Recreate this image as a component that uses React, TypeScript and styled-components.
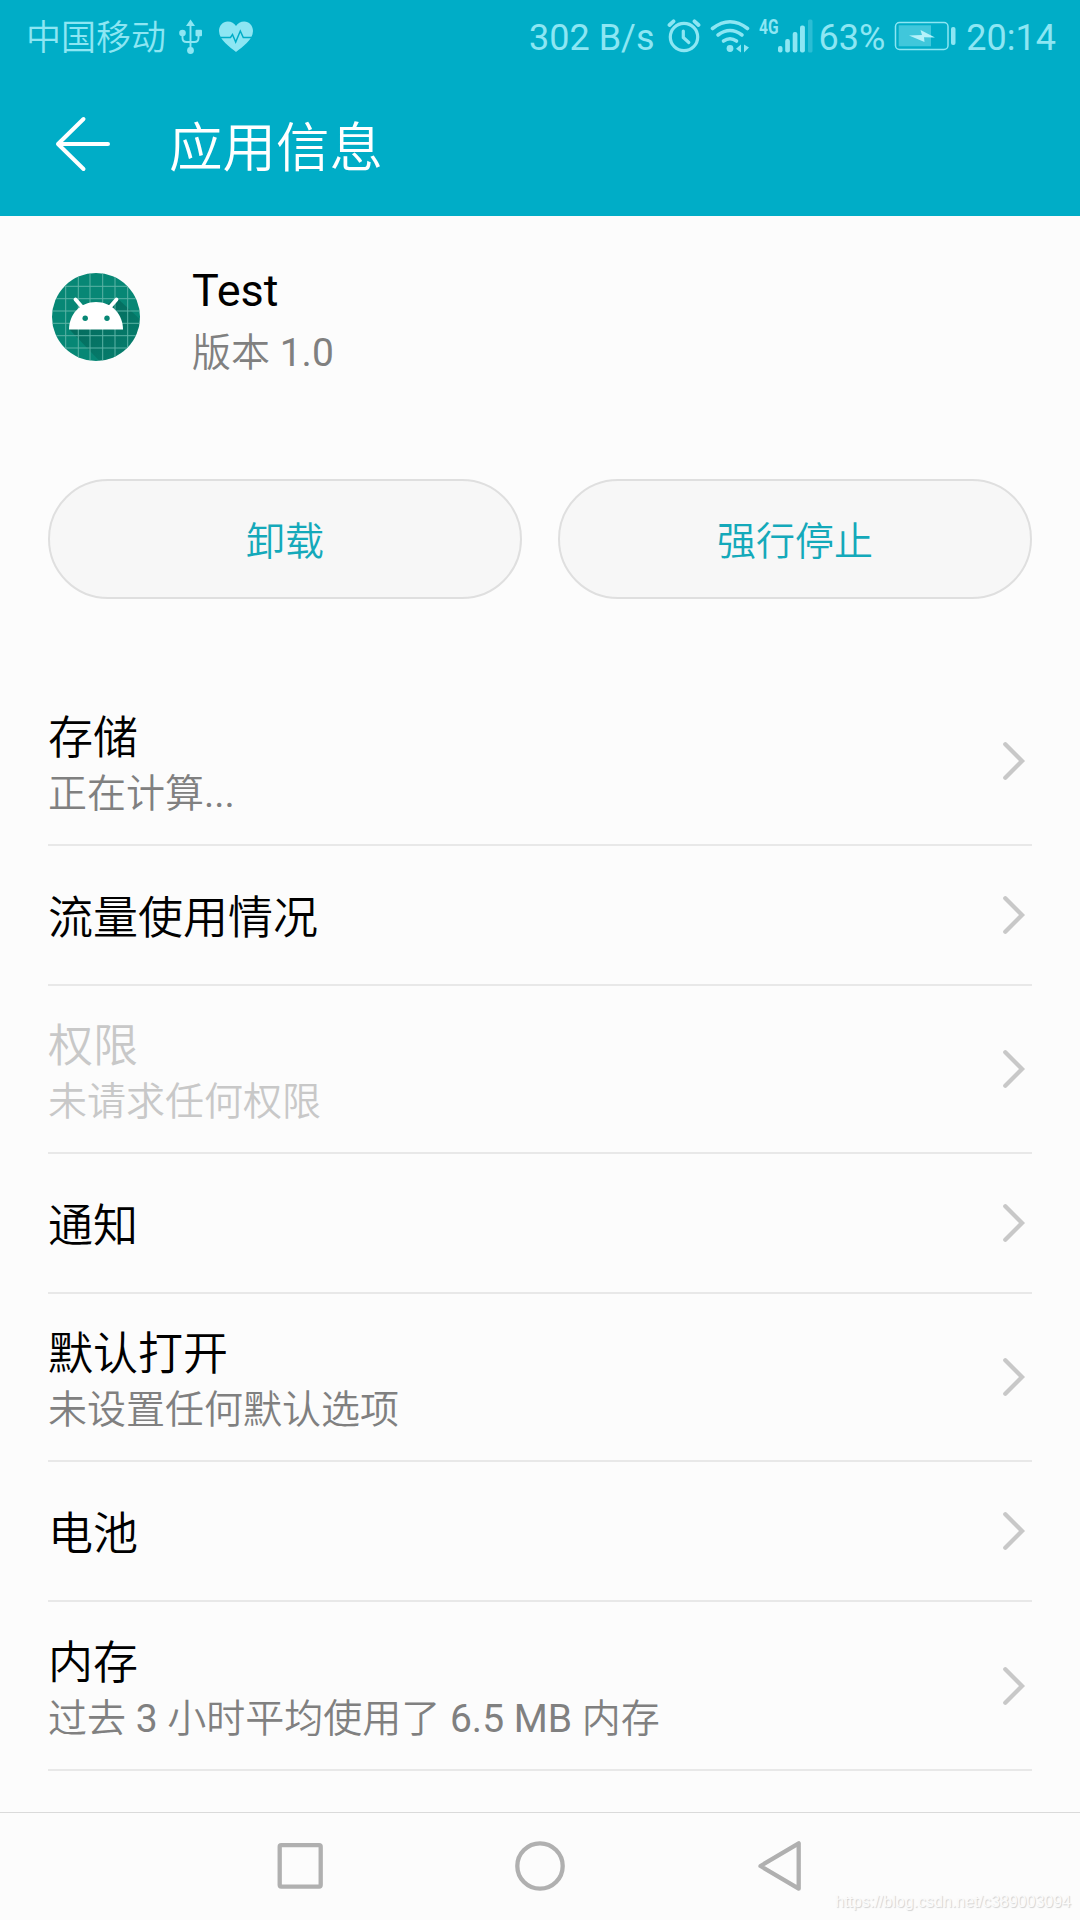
import React from "react";
import styled, { createGlobalStyle } from "styled-components";

const GlobalStyle = createGlobalStyle`
  *, *::before, *::after { box-sizing: border-box; }
  body { margin: 0; background: #fcfcfc; }
`;

const Screen = styled.div`
  display: flex;
  flex-direction: column;
  width: 1080px;
  height: 1920px;
  overflow: hidden;
  background: #fcfcfc;
  color: #000;
  font-family: Roboto, "Noto Sans CJK SC DemiLight", "Noto Sans CJK SC", sans-serif;
  font-size: 45px;
`;

const Header = styled.header`
  display: flex;
  flex-direction: column;
  height: 216px;
  flex: none;
  background: #00adc7;
`;

const StatusBar = styled.div`
  display: flex;
  align-items: center;
  height: 72px;
  padding: 0 24px 0 26px;
  color: #8de6f3;
  font-size: 36px;
  line-height: 72px;
  white-space: nowrap;
`;

const StatusText = styled.span<{ $size?: number; $gap?: number; $drop?: number }>`
  padding-top: ${(p) => p.$drop ?? 4}px;
  font-size: ${(p) => p.$size ?? 36}px;
  line-height: 68px;
  margin-left: ${(p) => p.$gap ?? 0}px;
`;

const StatusIcon = styled.svg<{ $gap?: number }>`
  display: block;
  flex: none;
  height: 72px;
  margin-left: ${(p) => p.$gap ?? 0}px;
`;

const Network = styled.span`
  display: flex;
  align-self: flex-start;
  width: 19px;
  margin-left: 9px;
  padding-top: 17px;
  font-family: Roboto, sans-serif;
  font-size: 21px;
  font-weight: 700;
  line-height: 20px;
  transform: scaleX(0.74);
  transform-origin: left center;
`;

const Spacer = styled.div`
  flex: 1;
`;

const TitleBar = styled.div`
  display: flex;
  align-items: center;
  height: 144px;
  padding-left: 54px;
  color: #fff;
`;

const BackIcon = styled.svg`
  width: 58px;
  height: 60px;
`;

const Title = styled.h1`
  margin: 0 0 1px 57px;
  font-family: "Noto Sans CJK SC DemiLight", "Noto Sans CJK SC", sans-serif;
  font-size: 53.5px;
  font-weight: 350;
  line-height: 72px;
`;

const AppInfo = styled.section`
  display: flex;
  height: 263px;
  flex: none;
  padding: 45px 52px 0;
`;

const AppIcon = styled.svg`
  width: 88px;
  height: 88px;
  margin-top: 12px;
`;

const AppText = styled.div`
  margin-left: 52px;
`;

const AppName = styled.div`
  height: 60px;
  font-size: 45px;
  line-height: 60px;
`;

const AppVersion = styled.div`
  height: 64px;
  color: #808080;
  font-size: 39px;
  line-height: 64px;
`;

const Actions = styled.section`
  display: flex;
  gap: 36px;
  flex: none;
  height: 198.4px;
  padding: 0 48px;
`;

const ActionButton = styled.button`
  flex: 1;
  height: 120px;
  padding: 0 0 2px;
  border: 2px solid #dfdfdf;
  border-radius: 60px;
  background: #f7f7f7;
  color: #14a9ba;
  font: inherit;
  font-size: 39px;
`;

const List = styled.ul`
  flex: 1;
  margin: 0;
  padding: 0 48px;
  list-style: none;
`;

const Row = styled.li<{ $tall: boolean; $disabled?: boolean }>`
  display: flex;
  align-items: center;
  justify-content: space-between;
  height: ${(p) => (p.$tall ? 168.33 : 140)}px;
  padding-right: 6px;
  border-bottom: 2px solid #e8e8e8;
  color: ${(p) => (p.$disabled ? "#c8c8c8" : "#000")};
`;

const RowText = styled.div<{ $tall: boolean }>`
  display: flex;
  flex-direction: column;
  padding-top: ${(p) => (p.$tall ? 11 : 8)}px;
`;

const RowTitle = styled.span`
  font-size: 45px;
  line-height: 56px;
`;

const RowSummary = styled.span<{ $disabled?: boolean }>`
  color: ${(p) => (p.$disabled ? "#c8c8c8" : "#808080")};
  font-size: 39px;
  line-height: 55px;
`;

const ChevronSvg = styled.svg`
  width: 26px;
  height: 44px;
`;

const NavBar = styled.nav`
  display: flex;
  position: relative;
  align-items: center;
  justify-content: center;
  gap: 184px;
  flex: none;
  height: 108px;
  padding-bottom: 2px;
  border-top: 1px solid #dadada;
`;

const NavIcon = styled.svg`
  width: 56px;
  height: 56px;
`;

const Watermark = styled.span`
  position: absolute;
  right: 9px;
  bottom: 8px;
  color: #fbfbfb;
  font-family: "Liberation Sans", Arial, sans-serif;
  font-size: 16px;
  line-height: 20px;
  text-shadow: 1px 1px 1px #d0d0d0;
`;

const Usb = () => (
  <StatusIcon $gap={12} width="26" viewBox="178 0 26 72" fill="currentColor">
    <path d="M190.500 19.500l4.500 6.500h-9z" />
    <circle cx="182.500" cy="33" r="3.300" />
    <rect x="195.500" y="29.800" width="6.500" height="6.500" rx="1" />
    <circle cx="190.500" cy="50.500" r="3.400" />
    <path
      d="M190.500 24v25M182.500 34v4q0 4 4 4h8q4 0 4-4v-4"
      fill="none"
      stroke="currentColor"
      strokeWidth="1.900"
    />
  </StatusIcon>
);

const Heart = () => (
  <StatusIcon $gap={14} width="36" viewBox="218 0 36 72">
    <path
      d="M236 52C230 47 219 40 219 31c0-5.500 4-9.500 8.700-9.500 3.700 0 6.700 1.800 8.300 4.500 1.600-2.700 4.600-4.500 8.300-4.500 4.700 0 8.700 4 8.700 9.500 0 9-11 16-17 21z"
      fill="currentColor"
    />
    <path
      d="M219 37.500h11.500l2-3 3.200 7.500 4.600-11 3 6.500H253"
      fill="none"
      stroke="#00adc7"
      strokeWidth="1.500"
    />
  </StatusIcon>
);

const Alarm = () => (
  <StatusIcon
    $gap={12}
    width="34"
    viewBox="667 0 34 72"
    fill="none"
    stroke="currentColor"
    strokeLinecap="round"
  >
    <circle cx="684" cy="37" r="13.700" strokeWidth="3.200" />
    <path d="M683.300 31v6.500l5.500 5" strokeWidth="3.200" />
    <path d="M669.500 25l4-3.700M698.500 25l-4-3.700" strokeWidth="3.800" />
  </StatusIcon>
);

const Wifi = () => (
  <StatusIcon
    $gap={9}
    width="40"
    viewBox="710 0 40 72"
    fill="none"
    stroke="currentColor"
    strokeLinecap="round"
    strokeWidth="3.600"
  >
    <path d="M712.500 28.500q17.500-13.500 35 0" />
    <path d="M718 35q12-9 24 0" />
    <path d="M723.500 41q6.500-4.500 13 0" />
    <circle cx="730" cy="48.500" r="3.400" fill="currentColor" stroke="none" />
    <path d="M741 44.500v8l-5-3.800zM744 44.500v8l5-5z" fill="currentColor" stroke="none" />
  </StatusIcon>
);

const Signal = () => (
  <StatusIcon $gap={-1} width="36" viewBox="777 0 36 72" fill="currentColor">
    <rect x="778" y="46" width="4.500" height="6.500" rx="2" />
    <rect x="785.200" y="39" width="4.700" height="13.500" rx="2" />
    <rect x="792.700" y="32" width="4.700" height="20.500" rx="2" />
    <rect x="800" y="25.500" width="4.900" height="27" rx="2" />
    <rect x="808" y="19.500" width="4.500" height="33" rx="1.500" opacity="0.300" />
  </StatusIcon>
);

const Battery = () => (
  <StatusIcon $gap={9} width="62" viewBox="894 0 62 72" fill="currentColor">
    <rect
      x="895.500"
      y="22.500"
      width="52.500"
      height="27"
      rx="4"
      fill="none"
      stroke="currentColor"
      strokeWidth="1.500"
    />
    <rect x="898.700" y="25.300" width="32.300" height="21" opacity="0.450" />
    <path d="M909 35.500l13-.5-1.500-5 14.500 7.500-11-.2.500 4.700z" fill="#b5f2fa" />
    <rect x="951" y="27" width="4.500" height="18" rx="2" />
  </StatusIcon>
);

const gridColumns = [65.7, 78.3, 90, 102.7, 115, 127.7];
const gridRows = [286.3, 298.7, 311, 323.3, 335.7, 348];

const RobotIcon = () => (
  <AppIcon viewBox="52 273 88 88">
    <defs>
      <clipPath id="disc">
        <circle cx="96" cy="317" r="44" />
      </clipPath>
      <linearGradient id="shade" x1="0" y1="0" x2="1" y2="1">
        <stop offset="0" stopColor="#00483f" stopOpacity="0.550" />
        <stop offset="1" stopColor="#00483f" stopOpacity="0" />
      </linearGradient>
    </defs>
    <g clipPath="url(#disc)">
      <rect x="52" y="273" width="88" height="88" fill="#078775" />
      <path d="M69 329l40 42h50V337l-42-39z" fill="url(#shade)" />
      <g stroke="#5cb3a6" strokeWidth="1">
        {gridColumns.map((x) => (
          <path key={x} d={`M${x} 273v88`} />
        ))}
        {gridRows.map((y) => (
          <path key={y} d={`M52 ${y}h88`} />
        ))}
      </g>
    </g>
    <path d="M69 329.500c0-15 11-27.500 27-27.500s27 12.500 27 27.500z" fill="#fff" />
    <path d="M75.500 299.500l7 8M116.500 299.500l-7 8" stroke="#fff" strokeWidth="3.800" strokeLinecap="round" />
    <circle cx="85.200" cy="318.300" r="2.700" fill="#078775" />
    <circle cx="107" cy="318.300" r="2.700" fill="#078775" />
  </AppIcon>
);

const Chevron = () => (
  <ChevronSvg viewBox="0 0 26 44" fill="none" stroke="#c8c8c8" strokeWidth="4.300" strokeLinecap="round">
    <path d="M5.300 5.200l16.700 16.800-16.700 16.800" />
  </ChevronSvg>
);

interface Entry {
  title: string;
  summary?: string;
  disabled?: boolean;
}

const entries: Entry[] = [
  { title: "存储", summary: "正在计算..." },
  { title: "流量使用情况" },
  { title: "权限", summary: "未请求任何权限", disabled: true },
  { title: "通知" },
  { title: "默认打开", summary: "未设置任何默认选项" },
  { title: "电池" },
  { title: "内存", summary: "过去 3 小时平均使用了 6.5 MB 内存" },
];

export default function App() {
  return (
    <Screen lang="zh-CN">
      <GlobalStyle />
      <Header>
        <StatusBar>
          <StatusText $size={35} $drop={6}>中国移动</StatusText>
          <Usb />
          <Heart />
          <Spacer />
          <StatusText>302 B/s</StatusText>
          <Alarm />
          <Wifi />
          <Network>4G</Network>
          <Signal />
          <StatusText $gap={6}>63%</StatusText>
          <Battery />
          <StatusText $gap={10}>20:14</StatusText>
        </StatusBar>
        <TitleBar>
          <BackIcon
            viewBox="54 114 58 60"
            fill="none"
            stroke="currentColor"
            strokeWidth="4"
            strokeLinecap="round"
            strokeLinejoin="round"
          >
            <path d="M83.500 119L58 144l25.500 25M58 144h50" />
          </BackIcon>
          <Title>应用信息</Title>
        </TitleBar>
      </Header>
      <AppInfo>
        <RobotIcon />
        <AppText>
          <AppName>Test</AppName>
          <AppVersion>版本 1.0</AppVersion>
        </AppText>
      </AppInfo>
      <Actions>
        <ActionButton>卸载</ActionButton>
        <ActionButton>强行停止</ActionButton>
      </Actions>
      <List>
        {entries.map((e) => (
          <Row key={e.title} $tall={Boolean(e.summary)} $disabled={e.disabled}>
            <RowText $tall={Boolean(e.summary)}>
              <RowTitle>{e.title}</RowTitle>
              {e.summary && <RowSummary $disabled={e.disabled}>{e.summary}</RowSummary>}
            </RowText>
            <Chevron />
          </Row>
        ))}
      </List>
      <NavBar>
        <NavIcon viewBox="272 1838 56 56" fill="none" stroke="#b0b0b0" strokeWidth="4.300">
          <rect x="279.700" y="1845.200" width="41" height="41.400" rx="1.500" />
        </NavIcon>
        <NavIcon viewBox="512 1838 56 56" fill="none" stroke="#b0b0b0" strokeWidth="4.300">
          <circle cx="540" cy="1866" r="22.700" />
        </NavIcon>
        <NavIcon
          viewBox="752 1838 56 56"
          fill="none"
          stroke="#b0b0b0"
          strokeWidth="4.300"
          strokeLinejoin="round"
        >
          <path d="M760.500 1866L798.700 1843.300v45.400z" />
        </NavIcon>
        <Watermark>https://blog.csdn.net/c389003094</Watermark>
      </NavBar>
    </Screen>
  );
}
